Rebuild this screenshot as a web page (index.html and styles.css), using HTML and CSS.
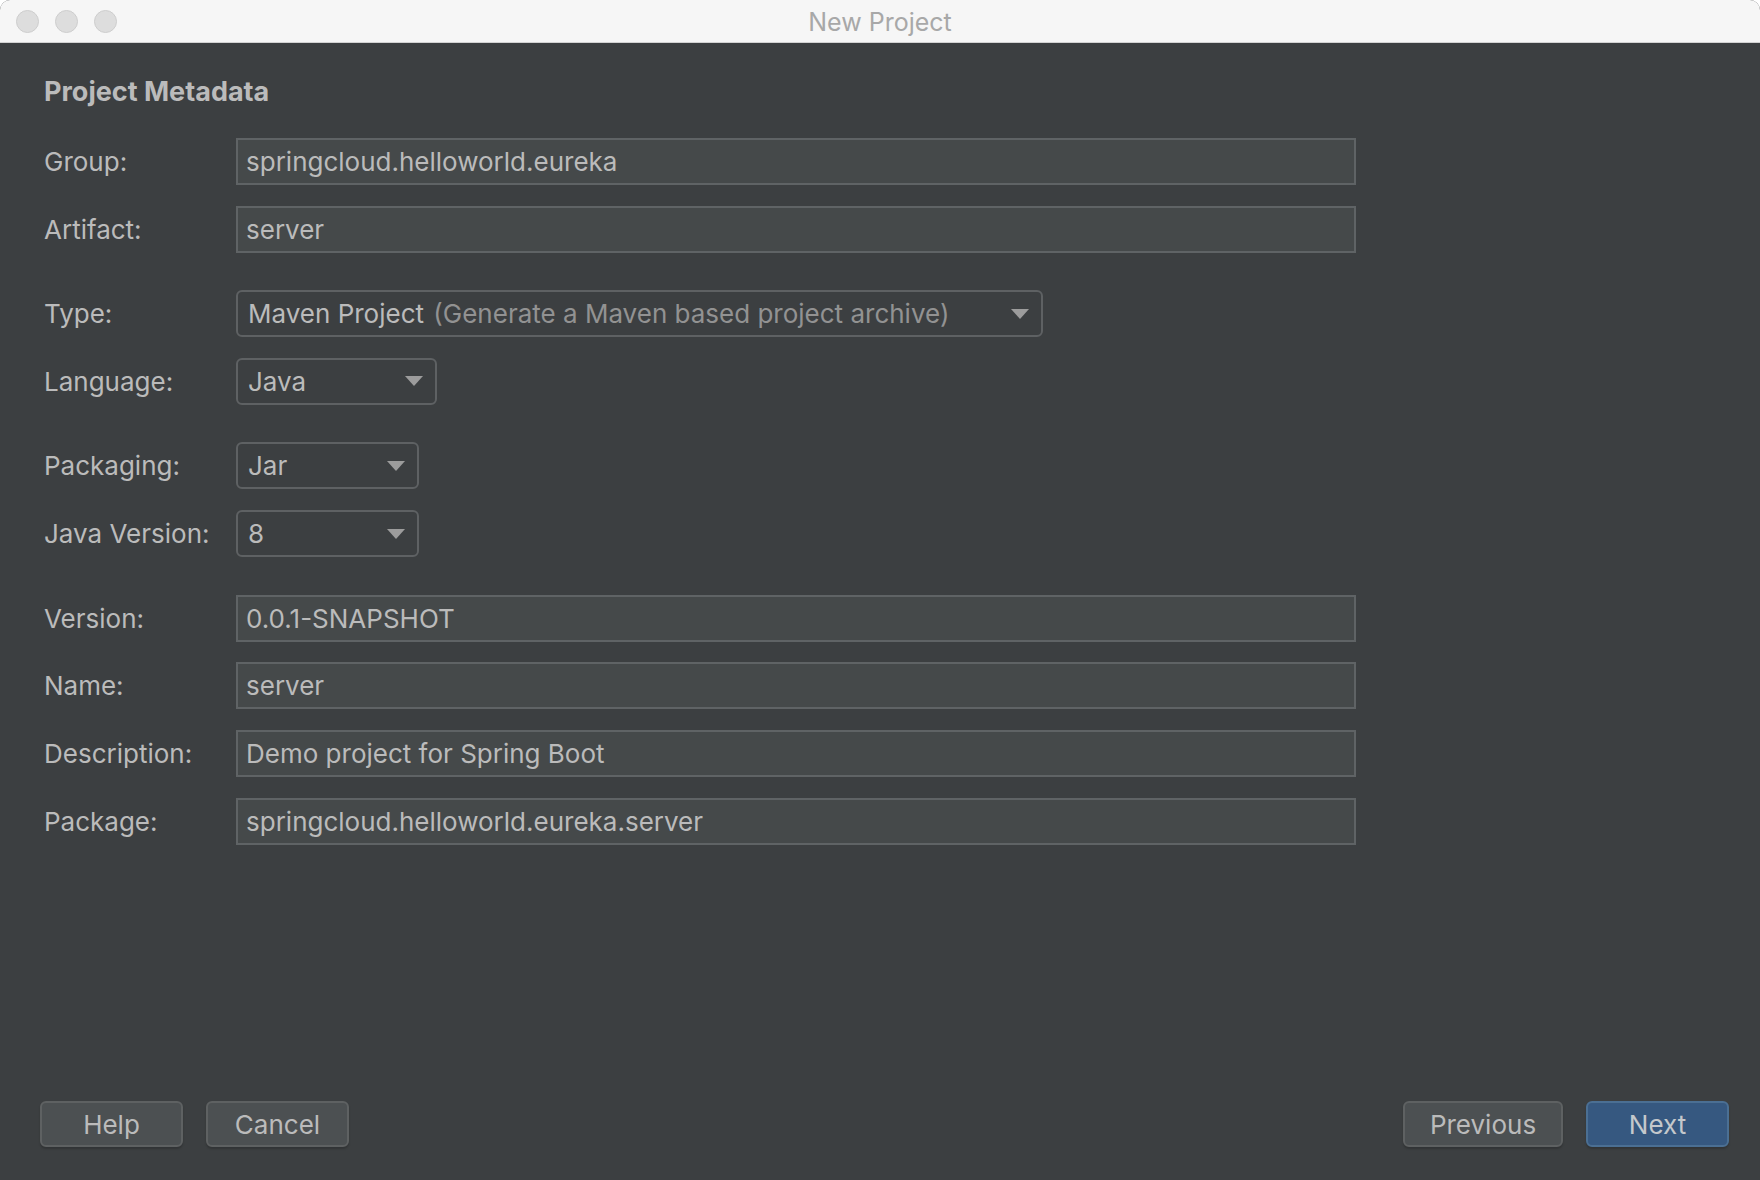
FILE: index.html
```html
<!DOCTYPE html>
<html>
<head>
<meta charset="utf-8">
<title>New Project</title>
<link rel="stylesheet" href="styles.css">
</head>
<body>
<div class="window">
  <div class="titlebar">
    <div class="lights">
      <span class="light"></span>
      <span class="light"></span>
      <span class="light"></span>
    </div>
    <div class="title">New Project</div>
  </div>
  <div class="content">
    <h1 class="heading">Project Metadata</h1>
    <div class="form">
      <div class="section">
        <label class="label">Group:</label>
        <div class="field text wide">springcloud.helloworld.eureka</div>
        <label class="label">Artifact:</label>
        <div class="field text wide">server</div>
      </div>
      <div class="section">
        <label class="label">Type:</label>
        <div class="field combo type"><span class="value">Maven Project <span class="hint">(Generate a Maven based project archive)</span></span><svg class="arrow" viewBox="0 0 18 10" width="18" height="10"><polygon points="0,0 18,0 9,10" /></svg></div>
        <label class="label">Language:</label>
        <div class="field combo lang"><span class="value">Java</span><svg class="arrow" viewBox="0 0 18 10" width="18" height="10"><polygon points="0,0 18,0 9,10" /></svg></div>
      </div>
      <div class="section">
        <label class="label">Packaging:</label>
        <div class="field combo small"><span class="value">Jar</span><svg class="arrow" viewBox="0 0 18 10" width="18" height="10"><polygon points="0,0 18,0 9,10" /></svg></div>
        <label class="label">Java Version:</label>
        <div class="field combo small"><span class="value">8</span><svg class="arrow" viewBox="0 0 18 10" width="18" height="10"><polygon points="0,0 18,0 9,10" /></svg></div>
      </div>
      <div class="section">
        <label class="label">Version:</label>
        <div class="field text wide">0.0.1-SNAPSHOT</div>
        <label class="label">Name:</label>
        <div class="field text wide">server</div>
        <label class="label">Description:</label>
        <div class="field text wide">Demo project for Spring Boot</div>
        <label class="label">Package:</label>
        <div class="field text wide">springcloud.helloworld.eureka.server</div>
      </div>
    </div>
  </div>
  <div class="footer">
    <div class="btn-group">
      <button class="btn help">Help</button>
      <button class="btn cancel">Cancel</button>
    </div>
    <div class="btn-group">
      <button class="btn previous">Previous</button>
      <button class="btn next primary">Next</button>
    </div>
  </div>
</div>
</body>
</html>
```
FILE: styles.css
```css
html, body {
  margin: 0;
  padding: 0;
  background: #ffffff;
}

body {
  font-family: Inter, "Liberation Sans", sans-serif;
  color: #bbbbbb;
}

.window {
  width: 1760px;
  height: 1180px;
  background: #3c3f41;
  display: flex;
  flex-direction: column;
  border-radius: 10px 10px 0 0;
  overflow: hidden;
}

.titlebar {
  height: 42px;
  flex: 0 0 42px;
  background: #f6f6f6;
  border-bottom: 1px solid #d2d2d2;
  display: flex;
  align-items: center;
  position: relative;
}

.lights {
  display: flex;
  gap: 16px;
  padding-left: 16px;
}

.light {
  width: 23px;
  height: 23px;
  border-radius: 50%;
  background: #dddddd;
  border: 1px solid #cdcdcd;
  box-sizing: border-box;
}

.title {
  position: absolute;
  left: 0;
  right: 0;
  top: 0;
  height: 42px;
  line-height: 44px;
  text-align: center;
  font-size: 25px;
  color: #a8a8a8;
  pointer-events: none;
}

.content {
  flex: 1;
  padding: 34px 0 0 44px;
}

.heading {
  margin: 0;
  font-size: 27px;
  font-weight: 700;
  line-height: 30px;
  color: #bbbbbb;
}

.form {
  margin-top: 31px;
  display: flex;
  flex-direction: column;
  gap: 37.5px;
}

.section {
  display: grid;
  grid-template-columns: 192px auto;
  row-gap: 20.7px;
  align-items: center;
}

.label {
  font-size: 26px;
  color: #bbbbbb;
  line-height: 47px;
}

.field {
  box-sizing: border-box;
  height: 47px;
  font-size: 26px;
  color: #bbbbbb;
  display: flex;
  align-items: center;
  white-space: nowrap;
}

.text {
  background: #45494a;
  border: 2px solid #5f6365;
  padding-left: 8px;
}

.wide {
  width: 1120px;
}

.combo {
  background: #3c3f41;
  border: 2px solid #5e6163;
  border-radius: 6px;
  padding: 0 12px 0 10px;
  justify-content: space-between;
}

.type {
  width: 807px;
}

.lang {
  width: 201px;
}

.small {
  width: 183px;
}

.hint {
  color: #929292;
  margin-left: 2px;
}

.arrow {
  fill: #9c9c9c;
  flex: 0 0 auto;
}

.footer {
  display: flex;
  justify-content: space-between;
  padding: 0 31px 33px 40px;
}

.btn-group {
  display: flex;
  gap: 23px;
}

.btn {
  box-sizing: border-box;
  height: 46px;
  width: 143px;
  background: #4c5052;
  border: 2px solid #5e6162;
  border-radius: 6px;
  color: #bbbbbb;
  font-family: Inter, "Liberation Sans", sans-serif;
  font-size: 26px;
  padding: 0;
  box-shadow: 0 2px 2px rgba(0, 0, 0, 0.18);
}

.previous {
  width: 160px;
}

.primary {
  background: #365880;
  border-color: #4b6f93;
  color: #c4c8cc;
}
```
